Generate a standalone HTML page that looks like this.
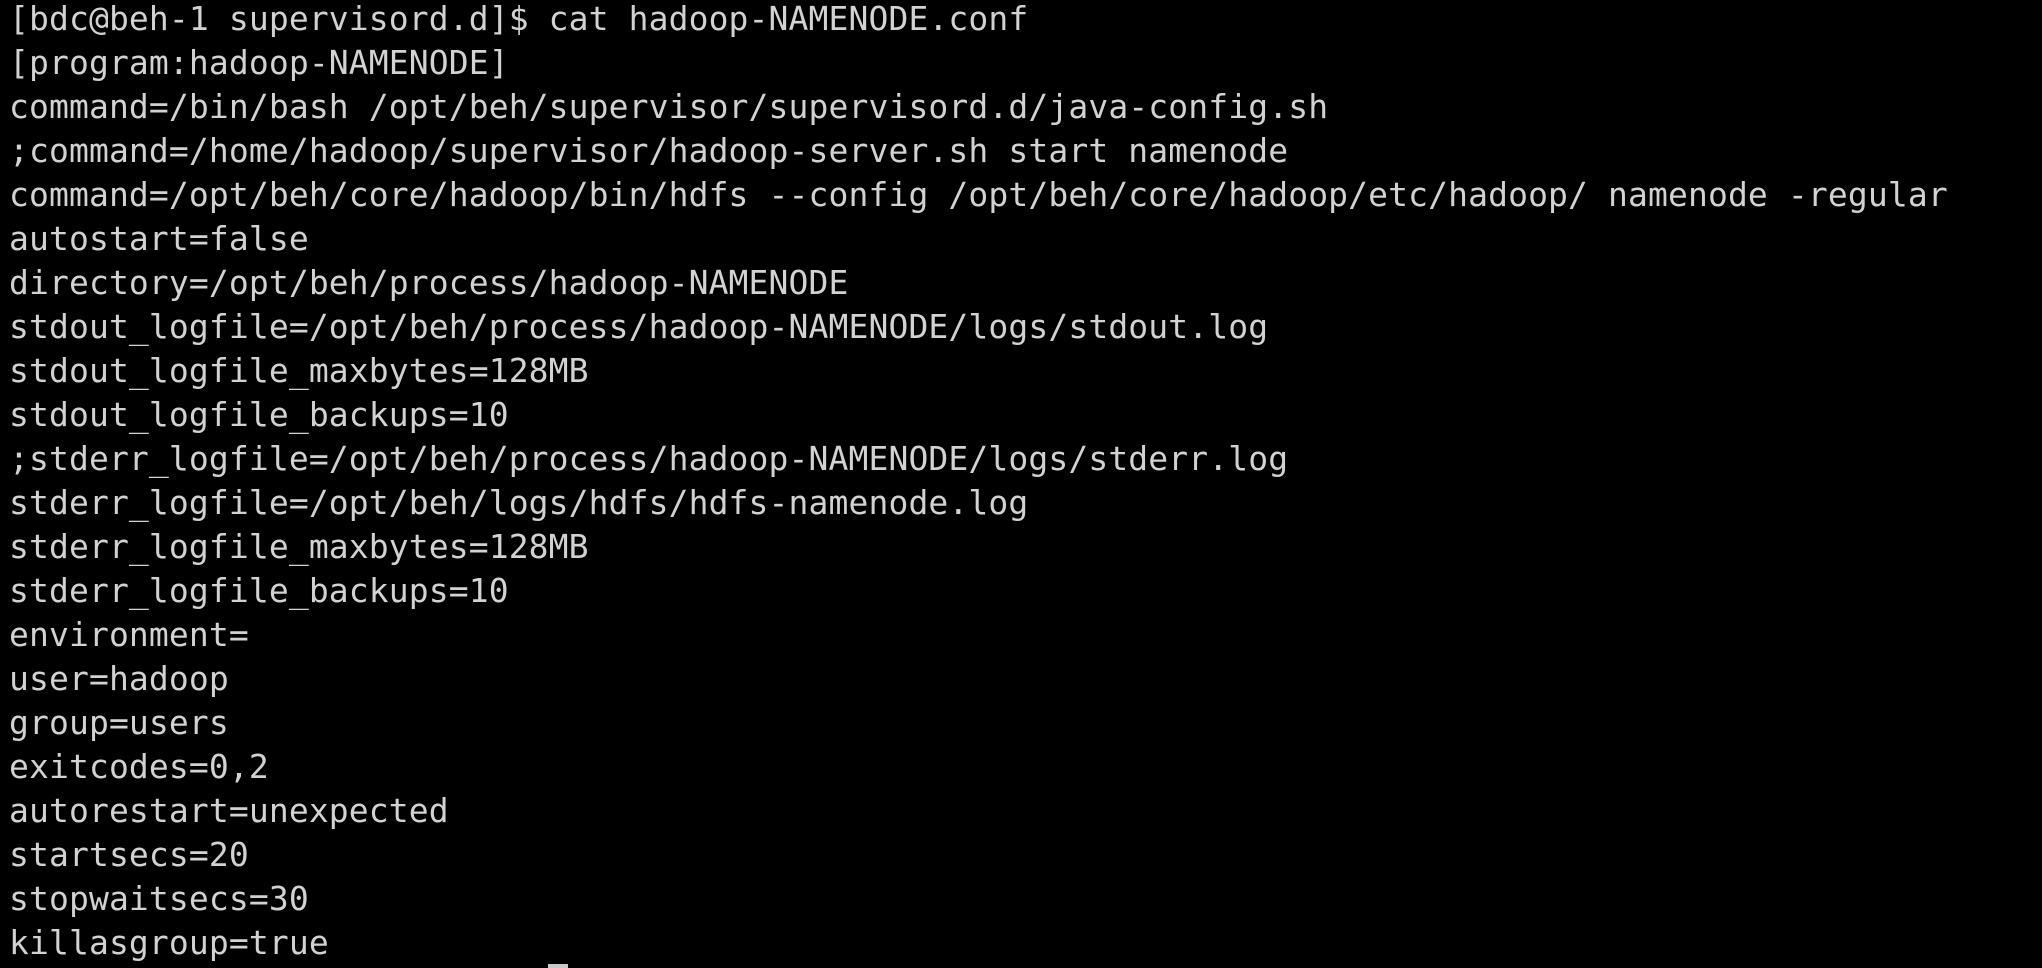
<!DOCTYPE html>
<html><head><style>
html,body{margin:0;padding:0;background:#000;width:2042px;height:968px;overflow:hidden}
pre{margin:0;position:absolute;left:9px;top:-3px;font-family:"DejaVu Sans Mono","Liberation Mono",monospace;font-size:33px;line-height:44px;letter-spacing:0.12px;color:#d2d2d2}
.cur{position:absolute;left:548px;top:964px;width:20px;height:4px;background:#c8c8c8}
</style></head><body>
<pre>[bdc@beh-1 supervisord.d]$ cat hadoop-NAMENODE.conf
[program:hadoop-NAMENODE]
command=/bin/bash /opt/beh/supervisor/supervisord.d/java-config.sh
;command=/home/hadoop/supervisor/hadoop-server.sh start namenode
command=/opt/beh/core/hadoop/bin/hdfs --config /opt/beh/core/hadoop/etc/hadoop/ namenode -regular
autostart=false
directory=/opt/beh/process/hadoop-NAMENODE
stdout_logfile=/opt/beh/process/hadoop-NAMENODE/logs/stdout.log
stdout_logfile_maxbytes=128MB
stdout_logfile_backups=10
;stderr_logfile=/opt/beh/process/hadoop-NAMENODE/logs/stderr.log
stderr_logfile=/opt/beh/logs/hdfs/hdfs-namenode.log
stderr_logfile_maxbytes=128MB
stderr_logfile_backups=10
environment=
user=hadoop
group=users
exitcodes=0,2
autorestart=unexpected
startsecs=20
stopwaitsecs=30
killasgroup=true</pre>
<div class="cur"></div>
</body></html>
